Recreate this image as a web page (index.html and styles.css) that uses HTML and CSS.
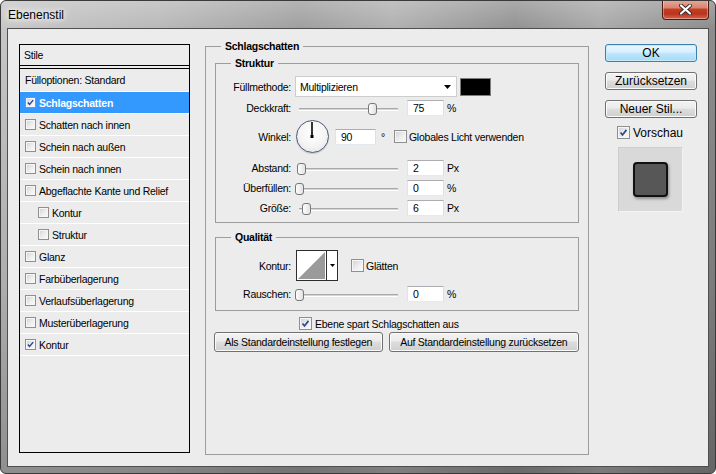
FILE: index.html
```html
<!DOCTYPE html>
<html lang="de">
<head>
<meta charset="utf-8">
<title>Ebenenstil</title>
<link rel="stylesheet" href="styles.css">
</head>
<body>
<div class="window">
  <div class="titlebar">
    <span class="title">Ebenenstil</span>
    <div class="close">
      <svg width="13" height="11" viewBox="0 0 13 11"><path d="M2 1.5L11 9.5M11 1.5L2 9.5" stroke="#3a2a28" stroke-width="4" stroke-linecap="round"/><path d="M2 1.5L11 9.5M11 1.5L2 9.5" stroke="#fff" stroke-width="2.2" stroke-linecap="round"/></svg>
    </div>
  </div>
  <div class="client">
    <div class="stylelist">
      <div class="list-head">Stile</div>
      <div class="list-body">
        <div class="item first">Fülloptionen: Standard</div>
        <div class="item sel"><span class="cb sm"><svg viewBox="0 0 11 11"><path d="M2.3 5.4L4.4 7.8L8.8 2.6"/></svg></span>Schlagschatten</div>
        <div class="item"><span class="cb sm"></span>Schatten nach innen</div>
        <div class="item"><span class="cb sm"></span>Schein nach außen</div>
        <div class="item"><span class="cb sm"></span>Schein nach innen</div>
        <div class="item"><span class="cb sm"></span>Abgeflachte Kante und Relief</div>
        <div class="item indent"><span class="cb sm"></span>Kontur</div>
        <div class="item indent"><span class="cb sm"></span>Struktur</div>
        <div class="item"><span class="cb sm"></span>Glanz</div>
        <div class="item"><span class="cb sm"></span>Farbüberlagerung</div>
        <div class="item"><span class="cb sm"></span>Verlaufsüberlagerung</div>
        <div class="item"><span class="cb sm"></span>Musterüberlagerung</div>
        <div class="item"><span class="cb sm"><svg viewBox="0 0 11 11"><path d="M2.3 5.4L4.4 7.8L8.8 2.6"/></svg></span>Kontur</div>
      </div>
    </div>

    <fieldset class="group main">
      <legend>Schlagschatten</legend>
      <fieldset class="group inner">
        <legend>Struktur</legend>
        <div class="row r-fill">
          <span class="lbl">Füllmethode:</span>
          <div class="select"><span>Multiplizieren</span><svg width="7" height="4" viewBox="0 0 7 4"><path d="M0 0H7L3.5 4Z" fill="#000"/></svg></div>
          <div class="swatch"></div>
        </div>
        <div class="row r-opac">
          <span class="lbl">Deckkraft:</span>
          <div class="slider"><div class="track"></div><div class="thumb" style="left:73px"></div></div>
          <div class="num">75</div><span class="unit">%</span>
        </div>
        <div class="row r-angle">
          <span class="lbl">Winkel:</span>
          <div class="dial"><svg width="30" height="30" viewBox="0 0 30 30"><line x1="15" y1="15.5" x2="15" y2="1" stroke="#000" stroke-width="1.6"/><rect x="13.5" y="14" width="3" height="3" fill="#000"/></svg></div>
          <div class="num wide">90</div><span class="deg">°</span>
          <span class="cb"></span><span class="cb-text">Globales Licht verwenden</span>
        </div>
        <div class="row r-dist">
          <span class="lbl">Abstand:</span>
          <div class="slider"><div class="track"></div><div class="thumb" style="left:2px"></div></div>
          <div class="num">2</div><span class="unit">Px</span>
        </div>
        <div class="row r-gap">
          <span class="lbl">Überfüllen:</span>
          <div class="slider"><div class="track"></div><div class="thumb" style="left:0px"></div></div>
          <div class="num">0</div><span class="unit">%</span>
        </div>
        <div class="row r-gap">
          <span class="lbl">Größe:</span>
          <div class="slider"><div class="track"></div><div class="thumb" style="left:7px"></div></div>
          <div class="num">6</div><span class="unit">Px</span>
        </div>
      </fieldset>

      <fieldset class="group inner quality">
        <legend>Qualität</legend>
        <div class="row r-curve">
          <span class="lbl">Kontur:</span>
          <div class="curve">
            <svg class="graph" width="29" height="29" viewBox="0 0 29 29"><path d="M1 28L28 1V28Z" fill="#9a9a9a"/></svg>
            <div class="drop"><svg width="5" height="3" viewBox="0 0 5 3"><path d="M0 0H5L2.5 3Z" fill="#000"/></svg></div>
          </div>
          <span class="cb glatt"></span><span class="cb-text">Glätten</span>
        </div>
        <div class="row r-noise">
          <span class="lbl">Rauschen:</span>
          <div class="slider"><div class="track"></div><div class="thumb" style="left:0px"></div></div>
          <div class="num">0</div><span class="unit">%</span>
        </div>
      </fieldset>

      <div class="check-row">
        <span class="cb"><svg viewBox="0 0 13 13"><path d="M3 6.6L5.3 9.4L10 3.4"/></svg></span><span class="cb-text">Ebene spart Schlagschatten aus</span>
      </div>
      <div class="btn-row">
        <div class="btn b1">Als Standardeinstellung festlegen</div>
        <div class="btn b2">Auf Standardeinstellung zurücksetzen</div>
      </div>
    </fieldset>

    <div class="side">
      <div class="btn ok">OK</div>
      <div class="btn">Zurücksetzen</div>
      <div class="btn">Neuer Stil...</div>
      <div class="pv-row"><span class="cb"><svg viewBox="0 0 13 13"><path d="M3 6.6L5.3 9.4L10 3.4"/></svg></span><span class="pv-text">Vorschau</span></div>
      <div class="preview"><div class="square"></div></div>
    </div>
  </div>
</div>
</body>
</html>
```
FILE: styles.css
```css
html, body {
  margin: 0;
  padding: 0;
}
body {
  width: 716px;
  height: 474px;
  overflow: hidden;
  background: #fff;
  font-family: "Liberation Sans", Arial, sans-serif;
  font-size: 10.5px;
  letter-spacing: -0.25px;
  color: #000;
}

.window {
  box-sizing: border-box;
  width: 716px;
  height: 474px;
  border: 1px solid #3a3a3a;
  border-radius: 6px;
  display: flex;
  flex-direction: column;
  overflow: hidden;
  background:
    linear-gradient(180deg, rgba(255,255,255,0.22) 0px, rgba(255,255,255,0) 28px, rgba(0,0,0,0.12) 60%, rgba(0,0,0,0.28) 100%),
    linear-gradient(90deg, #c6c6c6 0%, #b9b9b9 22%, #9f9f9f 42%, #b0b0b0 55%, #929292 72%, #a9a9a9 84%, #8c8c8c 100%);
}

.titlebar {
  height: 27px;
  flex: none;
  display: flex;
  align-items: flex-start;
  padding: 0 6px 0 7px;
}
.title {
  margin-top: 7px;
  font-size: 12px;
  letter-spacing: 0;
  line-height: 14px;
  color: #000;
  text-shadow: 0 0 5px #fff, 0 0 9px #fff, 0 0 14px rgba(255,255,255,0.9);
}
.close {
  margin-left: auto;
  margin-top: -1px;
  width: 47px;
  height: 20px;
  box-sizing: border-box;
  border: 1px solid #4a1c12;
  border-top: none;
  border-radius: 0 0 4px 4px;
  background: linear-gradient(180deg, #e7aa9c 0%, #d98571 40%, #c23d22 50%, #b9341b 72%, #d7644a 100%);
  box-shadow: inset 0 0 0 1px rgba(255,255,255,0.35);
  display: flex;
  align-items: center;
  justify-content: center;
}

.client {
  flex: 1;
  margin: 0 6px 6px 6px;
  border: 1px solid #4f4f4f;
  background: #ececec;
  display: flex;
  align-items: flex-start;
  padding: 11px 0 0 11px;
  box-sizing: border-box;
}

/* style list */
.stylelist {
  flex: none;
  width: 171px;
  height: 409px;
  box-sizing: border-box;
  border: 1px solid #000;
  margin-top: 4px;
}
.list-head {
  height: 20px;
  line-height: 20px;
  padding-left: 4px;
  border-bottom: 1px solid #000;
}
.list-body {
  margin-top: 2px;
  border-top: 1px solid #000;
}
.item {
  height: 21px;
  display: flex;
  align-items: center;
  padding-left: 5px;
  border-bottom: 1px solid #fff;
  white-space: nowrap;
}
.item.first {
  height: 22px;
}
.item.sel {
  background: #3399ff;
  color: #fff;
  font-weight: bold;
}
.item.indent {
  padding-left: 18px;
}
.item .cb {
  margin-right: 3px;
}

/* checkboxes */
.cb {
  flex: none;
  width: 13px;
  height: 13px;
  box-sizing: border-box;
  border: 1px solid #8e8f8f;
  background: linear-gradient(135deg, #cdd0d4 0%, #eeeeee 55%, #fbfbfb 100%);
  box-shadow: inset 0 0 0 1px #f6f6f6;
  display: flex;
}
.cb.sm {
  width: 11px;
  height: 11px;
}
.cb svg {
  width: 100%;
  height: 100%;
}
.cb svg path {
  fill: none;
  stroke: #2c4a8c;
  stroke-width: 2;
}
.cb.sm svg path {
  stroke-width: 1.8;
}
.cb-text {
  margin-left: 2px;
  white-space: nowrap;
}

/* group boxes */
.group {
  margin: 0;
  border: 1px solid #9d9d9d;
  min-width: 0;
}
.group > legend {
  font-weight: bold;
  line-height: 12px;
  padding: 0 4px;
}
.main {
  flex: none;
  width: 384px;
  height: 415px;
  box-sizing: border-box;
  margin-left: 15px;
  padding: 5px 9px 0 9px;
}
.main > legend {
  margin-left: 6px;
}
.inner {
  padding: 7px 0 6px 0;
}
.inner > legend {
  margin-left: 15px;
}
.quality {
  margin-top: 8px;
  padding-bottom: 8px;
}

/* rows */
.row {
  display: flex;
  align-items: center;
  height: 16px;
  white-space: nowrap;
}
.r-fill {
  height: 21px;
}
.r-opac {
  margin-top: 3px;
}
.r-angle {
  margin-top: 3px;
  height: 35px;
}
.r-dist {
  margin-top: 6px;
}
.r-gap {
  margin-top: 4px;
}
.r-curve {
  height: 31px;
}
.r-noise {
  margin-top: 5px;
}
.lbl {
  flex: none;
  width: 75px;
  text-align: right;
  margin-right: 4px;
}

.select {
  width: 162px;
  height: 21px;
  box-sizing: border-box;
  border: 1px solid #cdcdcd;
  background: #fff;
  display: flex;
  align-items: center;
  justify-content: space-between;
  padding: 0 5px 0 4px;
}
.swatch {
  margin-left: 3px;
  width: 31px;
  height: 18px;
  box-sizing: border-box;
  border: 1px solid #7d7d7d;
  background: #000;
}

.slider {
  position: relative;
  flex: none;
  width: 104px;
  height: 16px;
}
.track {
  position: absolute;
  left: 4px;
  right: 1px;
  top: 8px;
  height: 3px;
  box-sizing: border-box;
  border-top: 1px solid #a8a8a8;
  border-bottom: 1px solid #fff;
  background: #d5d5d5;
}
.thumb {
  position: absolute;
  top: 3px;
  width: 9px;
  height: 12px;
  box-sizing: border-box;
  border: 1px solid #777;
  border-radius: 3px;
  background: linear-gradient(90deg, #fdfdfd, #e2e2e2);
}

.num {
  flex: none;
  margin-left: 8px;
  width: 37px;
  height: 16px;
  box-sizing: border-box;
  border: 1px solid;
  border-color: #abadb3 #dbdfe6 #e3e9ef #e2e3ea;
  background: #fff;
  padding-left: 5px;
  line-height: 15px;
}
.num.wide {
  margin-left: 6px;
  width: 41px;
}
.unit {
  margin-left: 3px;
}
.deg {
  margin-left: 5px;
  margin-right: 9px;
}

.dial {
  flex: none;
  margin-left: 1px;
  width: 33px;
  height: 33px;
  box-sizing: border-box;
  border: 1.5px solid #4a577c;
  border-radius: 50%;
  background: radial-gradient(circle at 50% 40%, #ffffff 0%, #f4f4f4 55%, #dcdcdc 100%);
  box-shadow: 0 1px 1px rgba(0,0,0,0.15);
  display: flex;
}

.curve {
  flex: none;
  margin-left: 1px;
  width: 42px;
  height: 31px;
  box-sizing: border-box;
  border: 1px solid #2e2e2e;
  background: #fff;
  display: flex;
}
.curve .graph {
  flex: none;
}
.curve .drop {
  flex: 1;
  border-left: 1px solid #2e2e2e;
  display: flex;
  align-items: center;
  justify-content: center;
}
.glatt {
  margin-left: 13px;
}

.check-row {
  display: flex;
  align-items: center;
  height: 13px;
  margin-top: 6px;
  padding-left: 84px;
}
.check-row .cb-text {
  margin-left: 3px;
}
.btn-row {
  display: flex;
  gap: 6px;
  margin-top: 2px;
  margin-left: -1px;
}

.btn {
  height: 20px;
  box-sizing: border-box;
  border: 1px solid #707070;
  border-radius: 3px;
  background: linear-gradient(180deg, #f3f3f3 0%, #ebebeb 45%, #dddddd 50%, #cfcfcf 100%);
  box-shadow: inset 0 0 0 1px #fbfbfb;
  display: flex;
  align-items: center;
  justify-content: center;
  white-space: nowrap;
}
.b1 {
  width: 169px;
}
.b2 {
  width: 191px;
}

/* right column */
.side {
  flex: none;
  width: 92px;
  margin-left: 16px;
  margin-top: 4px;
  display: flex;
  flex-direction: column;
  font-size: 12px;
  letter-spacing: 0;
}
.side .btn {
  height: 18px;
  margin-bottom: 10px;
}
.side .btn.ok {
  border-color: #3c7fb1;
  background: linear-gradient(180deg, #eaf6fd 0%, #d9f0fc 45%, #bee6fd 50%, #a7d9f5 100%);
  box-shadow: inset 0 0 0 1px #c5eafc;
}
.pv-row {
  display: flex;
  align-items: center;
  height: 13px;
  margin-top: -2px;
  padding-left: 12px;
}
.pv-text {
  margin-left: 3px;
}
.preview {
  margin: 8px 0 0 13px;
  width: 65px;
  height: 65px;
  box-sizing: border-box;
  background: #d9d9d9;
  border: 1px solid;
  border-color: #cdcdcd #f3f3f3 #f3f3f3 #cdcdcd;
  display: flex;
  align-items: center;
  justify-content: center;
}
.square {
  width: 35px;
  height: 35px;
  box-sizing: border-box;
  border: 2px solid #111;
  border-radius: 4px;
  background: #575757;
  box-shadow: 1px 2px 3px rgba(0,0,0,0.35);
}
```
